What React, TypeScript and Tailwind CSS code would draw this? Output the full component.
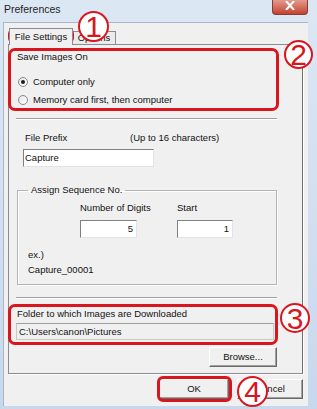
import React from "react";

const font = { fontFamily: '"Liberation Sans", Arial, sans-serif' };

function Radio({ checked, label }: { checked?: boolean; label: string }) {
  return (
    <div className="flex h-[14px] items-center">
      <span className="ml-[2px] flex h-[10px] w-[10px] items-center justify-center rounded-full border border-[#8a8a8a] bg-gradient-to-br from-[#e6e6e6] to-white">
        {checked && <span className="h-[4px] w-[4px] rounded-full bg-[#1c1c1c]" />}
      </span>
      <span className="ml-[5px]">{label}</span>
    </div>
  );
}

function Etched() {
  return <div className="h-[2px] border-t border-[#a0a0a0] border-b border-b-white" />;
}

function Button({ label, w }: { label: string; w: string }) {
  return (
    <div
      className={`${w} flex h-[20px] items-center justify-center border border-t-white border-l-white border-b-[#696969] border-r-[#696969] bg-[#f0f0f0] shadow-[inset_-1px_-1px_0_#a0a0a0]`}
    >
      {label}
    </div>
  );
}

function Mark({ n, cls }: { n: string; cls: string }) {
  return (
    <div
      className={`absolute ${cls} flex items-center justify-center rounded-full border-2 border-[#d9151d] bg-white pt-[1px] text-[30px] leading-none text-[#d9151d]`}
    >
      {n}
    </div>
  );
}

export default function App() {
  return (
    <div
      className="relative h-[409px] w-[317px] overflow-hidden bg-gradient-to-b from-[#dce7f4] to-[#c8d8ec] text-[9.5px] leading-[12px] text-[#111]"
      style={font}
    >
      {/* title bar */}
      <div className="flex h-[22px] items-start justify-between">
        <div className="ml-[4px] mt-[3px] text-[10.5px] leading-[13px] text-[#1e1e1e]">Preferences</div>
        <div className="mr-[9px] flex h-[15px] w-[36px] items-center justify-center rounded-b-[4px] border border-t-0 border-[#8c3b32] bg-gradient-to-b from-[#e39a8e] to-[#c1422f]">
          <svg width="10" height="9" viewBox="0 0 10 9" className="-mt-[4px]">
            <path d="M1 0 L9 9 M9 0 L1 9" stroke="white" strokeWidth="2" />
          </svg>
        </div>
      </div>

      {/* client */}
      <div className="ml-[3px] h-[384px] w-[305px] border-t border-l border-[#a9b8c9] bg-[#f0f0f0] pl-[4px]">
        {/* tabs */}
        <div className="mt-[5px] flex items-end pl-[1px]">
          <div className="relative z-10 -mb-px flex h-[17px] w-[64px] items-center justify-center border border-b-0 border-[#898c95] bg-[#f0f0f0] pb-[1px]">
            File Settings
          </div>
          <div className="flex h-[13px] w-[43px] items-center justify-center border border-l-0 border-b-0 border-[#898c95] bg-[#ebebeb]">
            Options
          </div>
        </div>

        {/* panel */}
        <div className="h-[330px] w-[295px] border border-[#898c95] border-r-[#6f6f6f] bg-[#f0f0f0] pl-[7px] pr-[25px] pt-[6px] shadow-[1px_1px_0_#ffffff]">
          <div className="h-[12px] pl-[1px]">Save Images On</div>
          <div className="mt-[12px]">
            <Radio checked label="Computer only" />
          </div>
          <div className="mt-[4px]">
            <Radio label="Memory card first, then computer" />
          </div>

          <div className="mt-[11px]">
            <Etched />
          </div>

          <div className="mt-[12px] flex h-[12px] pl-[9px]">
            <span className="w-[105px]">File Prefix</span>
            <span>(Up to 16 characters)</span>
          </div>
          <div className="ml-[7px] mt-[5px] flex h-[18px] w-[131px] items-center border border-t-[#808080] border-l-[#808080] border-b-[#e3e3e3] border-r-[#e3e3e3] bg-white pl-[1px]">
            Capture
          </div>

          <fieldset className="ml-[1px] mt-[17px] border border-[#b4b4b4] px-0 pb-[8px] shadow-[inset_1px_1px_0_#ffffff,1px_1px_0_#ffffff]">
            <legend className="ml-[10px] h-[12px] px-[3px]">Assign Sequence No.</legend>
            <div className="flex gap-[40px] pl-[62px] pt-[6px]">
              <div className="w-[57px]">
                <div className="h-[12px] whitespace-nowrap">Number of Digits</div>
                <div className="mt-[6px] flex h-[18px] items-center justify-end border border-t-[#808080] border-l-[#808080] border-b-[#e3e3e3] border-r-[#e3e3e3] bg-white pr-[3px]">
                  5
                </div>
              </div>
              <div className="w-[56px]">
                <div className="h-[12px]">Start</div>
                <div className="mt-[6px] flex h-[18px] items-center justify-end border border-t-[#808080] border-l-[#808080] border-b-[#e3e3e3] border-r-[#e3e3e3] bg-white pr-[3px]">
                  1
                </div>
              </div>
            </div>
            <div className="mt-[11px] h-[12px] pl-[10px]">ex.)</div>
            <div className="mt-[3px] h-[12px] pl-[10px]">Capture_00001</div>
          </fieldset>

          <div className="mt-[12px]">
            <Etched />
          </div>

          <div className="mt-[9px] h-[12px] pl-[1px]">Folder to which Images are Downloaded</div>
          <div className="mt-[3px] flex h-[17px] w-[258px] items-center border border-[#c8c8c8] border-t-[#a0a0a0] bg-[#f0f0f0] pl-[2px]">
            C:\Users\canon\Pictures
          </div>
          <div className="mt-[7px] flex justify-end">
            <Button label="Browse..." w="w-[68px]" />
          </div>
        </div>

        {/* dialog buttons */}
        <div className="mt-[5px] flex justify-end gap-[8px] pr-[5px]">
          <Button label="OK" w="w-[70px]" />
          <Button label="Cancel" w="w-[66px]" />
        </div>
      </div>

      {/* annotations */}
      <div className="absolute left-[8px] top-[28px] h-[16px] w-[66px] rounded-[6px] border-[3px] border-[#d9151d]" />
      <div className="absolute left-[8px] top-[48px] h-[63px] w-[271px] rounded-[7px] border-[3px] border-[#d9151d]" />
      <div className="absolute left-[8px] top-[304px] h-[41px] w-[270px] rounded-[7px] border-[3px] border-[#d9151d]" />
      <div className="absolute left-[157px] top-[376px] h-[26px] w-[75px] rounded-[6px] border-[3px] border-[#d9151d]" />
      <Mark n="1" cls="left-[78px] top-[11px] h-[31px] w-[31px]" />
      <Mark n="2" cls="left-[284px] top-[40px] h-[29px] w-[29px]" />
      <Mark n="3" cls="left-[280px] top-[303px] h-[30px] w-[30px]" />
      <Mark n="4" cls="left-[237px] top-[376px] h-[31px] w-[31px]" />
    </div>
  );
}
